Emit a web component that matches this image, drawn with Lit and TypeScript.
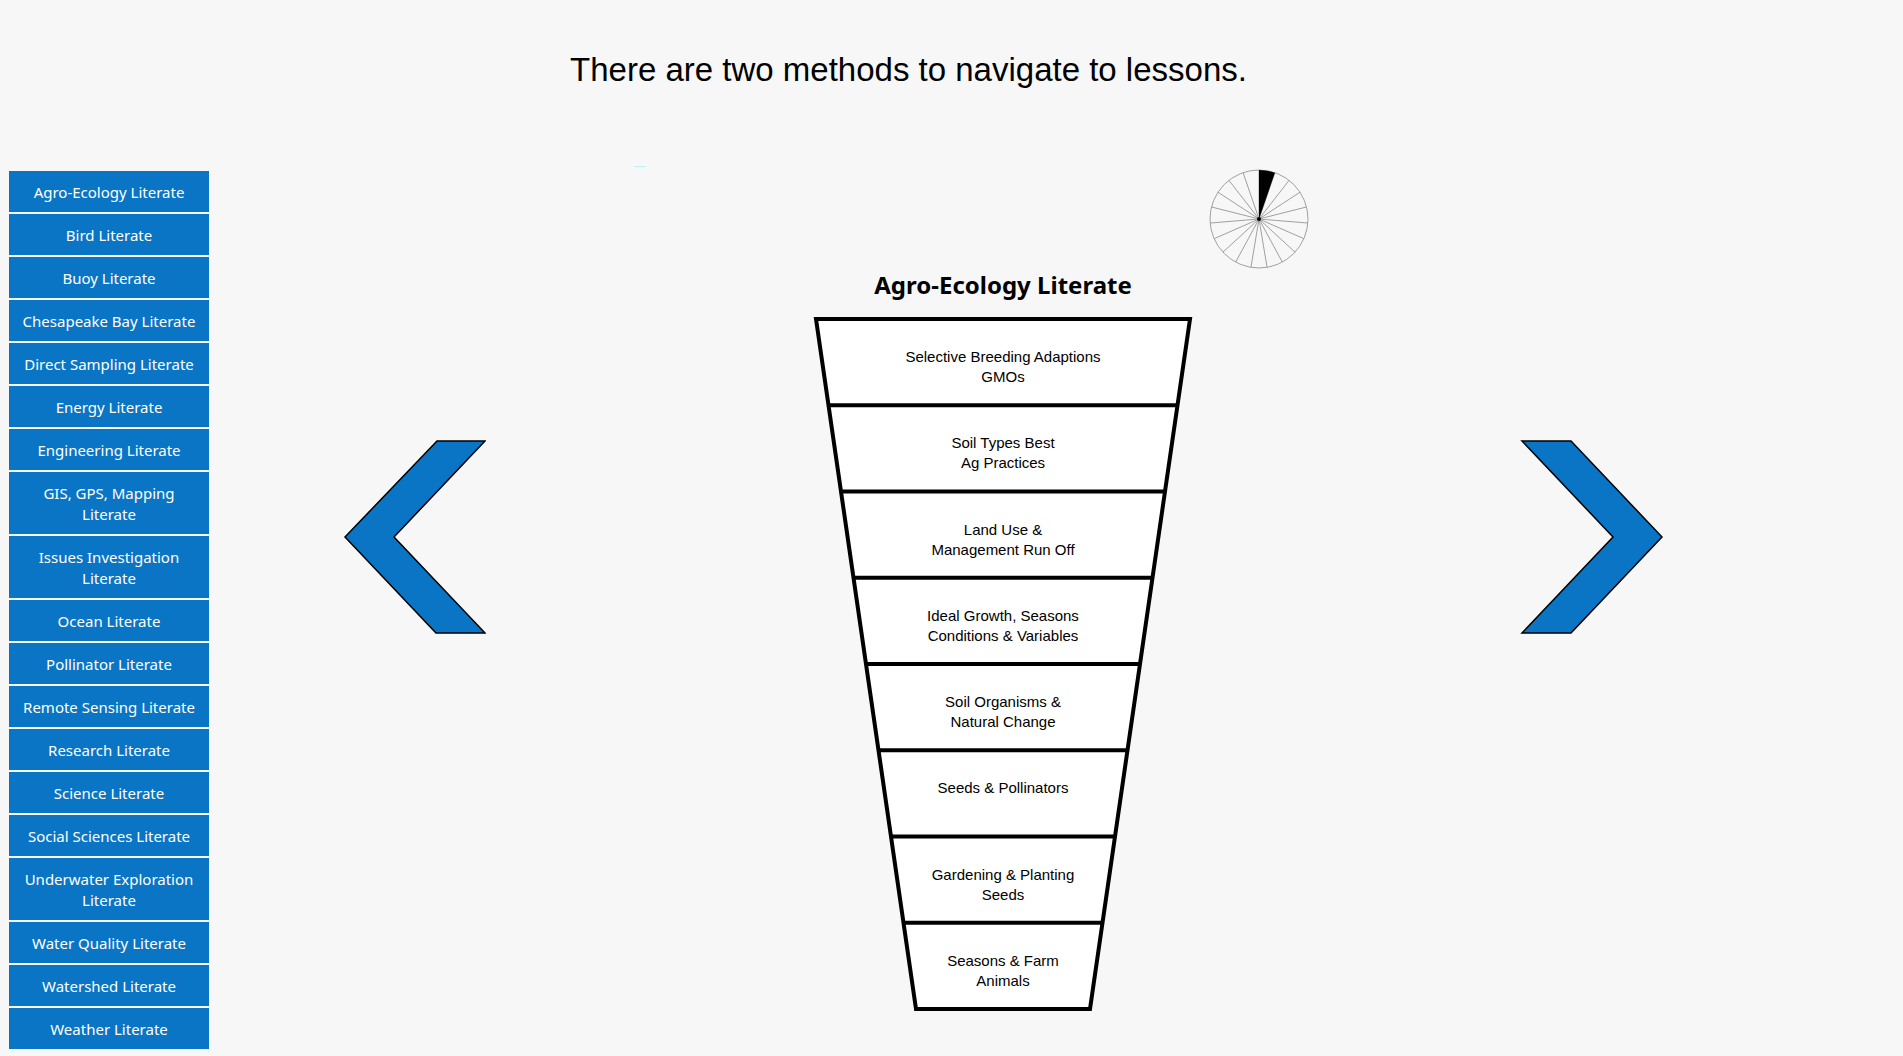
import { LitElement, html, css, svg } from "lit";
import { customElement, state } from "lit/decorators.js";

const SUBJECTS = [
  "Agro-Ecology Literate",
  "Bird Literate",
  "Buoy Literate",
  "Chesapeake Bay Literate",
  "Direct Sampling Literate",
  "Energy Literate",
  "Engineering Literate",
  "GIS, GPS, Mapping Literate",
  "Issues Investigation Literate",
  "Ocean Literate",
  "Pollinator Literate",
  "Remote Sensing Literate",
  "Research Literate",
  "Science Literate",
  "Social Sciences Literate",
  "Underwater Exploration Literate",
  "Water Quality Literate",
  "Watershed Literate",
  "Weather Literate",
];

const LESSONS = [
  ["Selective Breeding Adaptions", "GMOs"],
  ["Soil Types Best", "Ag Practices"],
  ["Land Use &", "Management Run Off"],
  ["Ideal Growth, Seasons", "Conditions & Variables"],
  ["Soil Organisms &", "Natural Change"],
  ["Seeds & Pollinators"],
  ["Gardening & Planting", "Seeds"],
  ["Seasons & Farm", "Animals"],
];

/** Wheel with one slice per subject; the current slice is filled. */
@customElement("subject-wheel")
export class SubjectWheel extends LitElement {
  static properties = { count: { type: Number }, index: { type: Number } };
  declare count: number;
  declare index: number;

  static styles = css`
    :host {
      display: block;
    }
    .wheel {
      display: block;
      width: 100px;
      height: 100px;
    }
    .line {
      fill: none;
      stroke: #a0a0a0;
    }
  `;

  private point(i: number) {
    const a = (i / this.count) * Math.PI * 2;
    return { x: 50 + 49 * Math.sin(a), y: 50 - 49 * Math.cos(a) };
  }

  render() {
    const from = this.point(this.index);
    const to = this.point(this.index + 1);
    return html`<svg class="wheel" viewBox="0 0 100 100" aria-hidden="true">
      ${Array.from({ length: this.count }, (_, i) => {
        const p = this.point(i);
        return svg`<line class="line" x1="50" y1="50" x2=${p.x} y2=${p.y} />`;
      })}
      <circle class="line" cx="50" cy="50" r="49" />
      <path d="M50 50 L${from.x} ${from.y} A49 49 0 0 1 ${to.x} ${to.y} Z" />
      <circle cx="50" cy="50" r="2" />
    </svg>`;
  }
}

/** Inverted pyramid of lessons, widest at the top. */
@customElement("lesson-funnel")
export class LessonFunnel extends LitElement {
  static properties = { lessons: { attribute: false } };
  declare lessons: string[][];

  static styles = css`
    :host {
      display: block;
    }
    .funnel {
      position: relative;
      width: 380px;
    }
    .shape {
      position: absolute;
      inset: 0;
      width: 100%;
      height: 100%;
    }
    .outline {
      fill: #fff;
      stroke: #000;
      stroke-width: 4;
    }
    .lessons {
      position: relative;
      display: grid;
      grid-template-rows: repeat(8, 1fr);
      height: 694px;
      margin: 0;
      padding: 2px 0;
      box-sizing: border-box;
      list-style: none;
    }
    .lesson {
      padding-top: 28px;
      text-align: center;
    }
    .link {
      display: inline-block;
      font: 15px/20px "Liberation Sans", Arial, sans-serif;
      color: #000;
      text-decoration: none;
      white-space: nowrap;
    }
    .row {
      display: block;
    }
  `;

  render() {
    const n = this.lessons.length;
    return html`<div class="funnel">
      <svg class="shape" viewBox="0 0 380 694" aria-hidden="true">
        <path class="outline" d="M3 2 H377 L277 692 H103 Z" />
        ${this.lessons.slice(1).map((_, i) => {
          const t = (i + 1) / n;
          return svg`<line class="outline" x1=${3 + 100 * t} x2=${377 - 100 * t} y1=${2 + 690 * t} y2=${2 + 690 * t} />`;
        })}
      </svg>
      <ol class="lessons">
        ${this.lessons.map(
          (rows) => html`<li class="lesson">
            <a class="link" href="#">${rows.map((r) => html`<span class="row">${r}</span>`)}</a>
          </li>`,
        )}
      </ol>
    </div>`;
  }
}

@customElement("app-root")
export class AppRoot extends LitElement {
  @state() private index = 0;

  static styles = css`
    :host {
      display: block;
      min-height: 100vh;
      background: #f7f7f7;
      color: #000;
    }
    .intro {
      position: relative;
      margin: 0;
      padding: 46px 86px 77px 0;
      font: 33px/48px "Arial Narrow", "Liberation Sans", Arial, sans-serif;
      text-align: center;
    }
    /* Faint dash under the heading */
    .intro::after {
      content: "";
      position: absolute;
      left: 33.3%;
      bottom: 4px;
      width: 12px;
      height: 1px;
      background: #bdf6f8;
    }
    .layout {
      display: flex;
      align-items: flex-start;
      padding: 0 0 7px 9px;
    }
    .menu {
      display: flex;
      flex-direction: column;
      gap: 2px;
      flex: 0 0 200px;
    }
    .item {
      padding: 11px 10px 9px;
      border: 0;
      background: #0a75c4;
      color: #fff;
      font: 15px/21px Tahoma, "Noto Sans", sans-serif;
      text-align: center;
      cursor: pointer;
    }
    .stage {
      flex: 1;
      display: flex;
      justify-content: space-between;
      align-items: flex-start;
      padding: 0 240px 0 134px;
    }
    .arrow {
      display: block;
      margin-top: 268px;
      padding: 0;
      border: 0;
      background: none;
      cursor: pointer;
    }
    .chevron {
      display: block;
      width: 143px;
      height: 196px;
      fill: #0a75c4;
      stroke: #000;
      stroke-width: 1.5;
    }
    .subject {
      display: flex;
      flex-direction: column;
      align-items: center;
      width: 612px;
    }
    .wheel {
      align-self: flex-end;
      margin-top: -2px;
    }
    .name {
      margin: 0 0 16px;
      font: bold 24px/32px Tahoma, "Noto Sans", sans-serif;
    }
  `;

  private step(by: number) {
    this.index = (this.index + by + SUBJECTS.length) % SUBJECTS.length;
  }

  render() {
    return html`
      <h1 class="intro">There are two methods to navigate to lessons.</h1>
      <div class="layout">
        <nav class="menu" aria-label="Subjects">
          ${SUBJECTS.map(
            (s, i) => html`<button class="item" @click=${() => (this.index = i)}>${s}</button>`,
          )}
        </nav>
        <main class="stage">
          <button class="arrow" aria-label="Previous subject" @click=${() => this.step(-1)}>
            <svg class="chevron" viewBox="0 0 143 196">
              <path d="M94 2 H142 L51 98 L142 194 H93 L2 98 Z" />
            </svg>
          </button>
          <section class="subject">
            <subject-wheel class="wheel" .count=${SUBJECTS.length} .index=${this.index}></subject-wheel>
            <h2 class="name">${SUBJECTS[this.index]}</h2>
            <lesson-funnel .lessons=${LESSONS}></lesson-funnel>
          </section>
          <button class="arrow" aria-label="Next subject" @click=${() => this.step(1)}>
            <svg class="chevron" viewBox="0 0 143 196">
              <path d="M2 2 H51 L142 98 L51 194 H2 L93 98 Z" />
            </svg>
          </button>
        </main>
      </div>
    `;
  }
}
